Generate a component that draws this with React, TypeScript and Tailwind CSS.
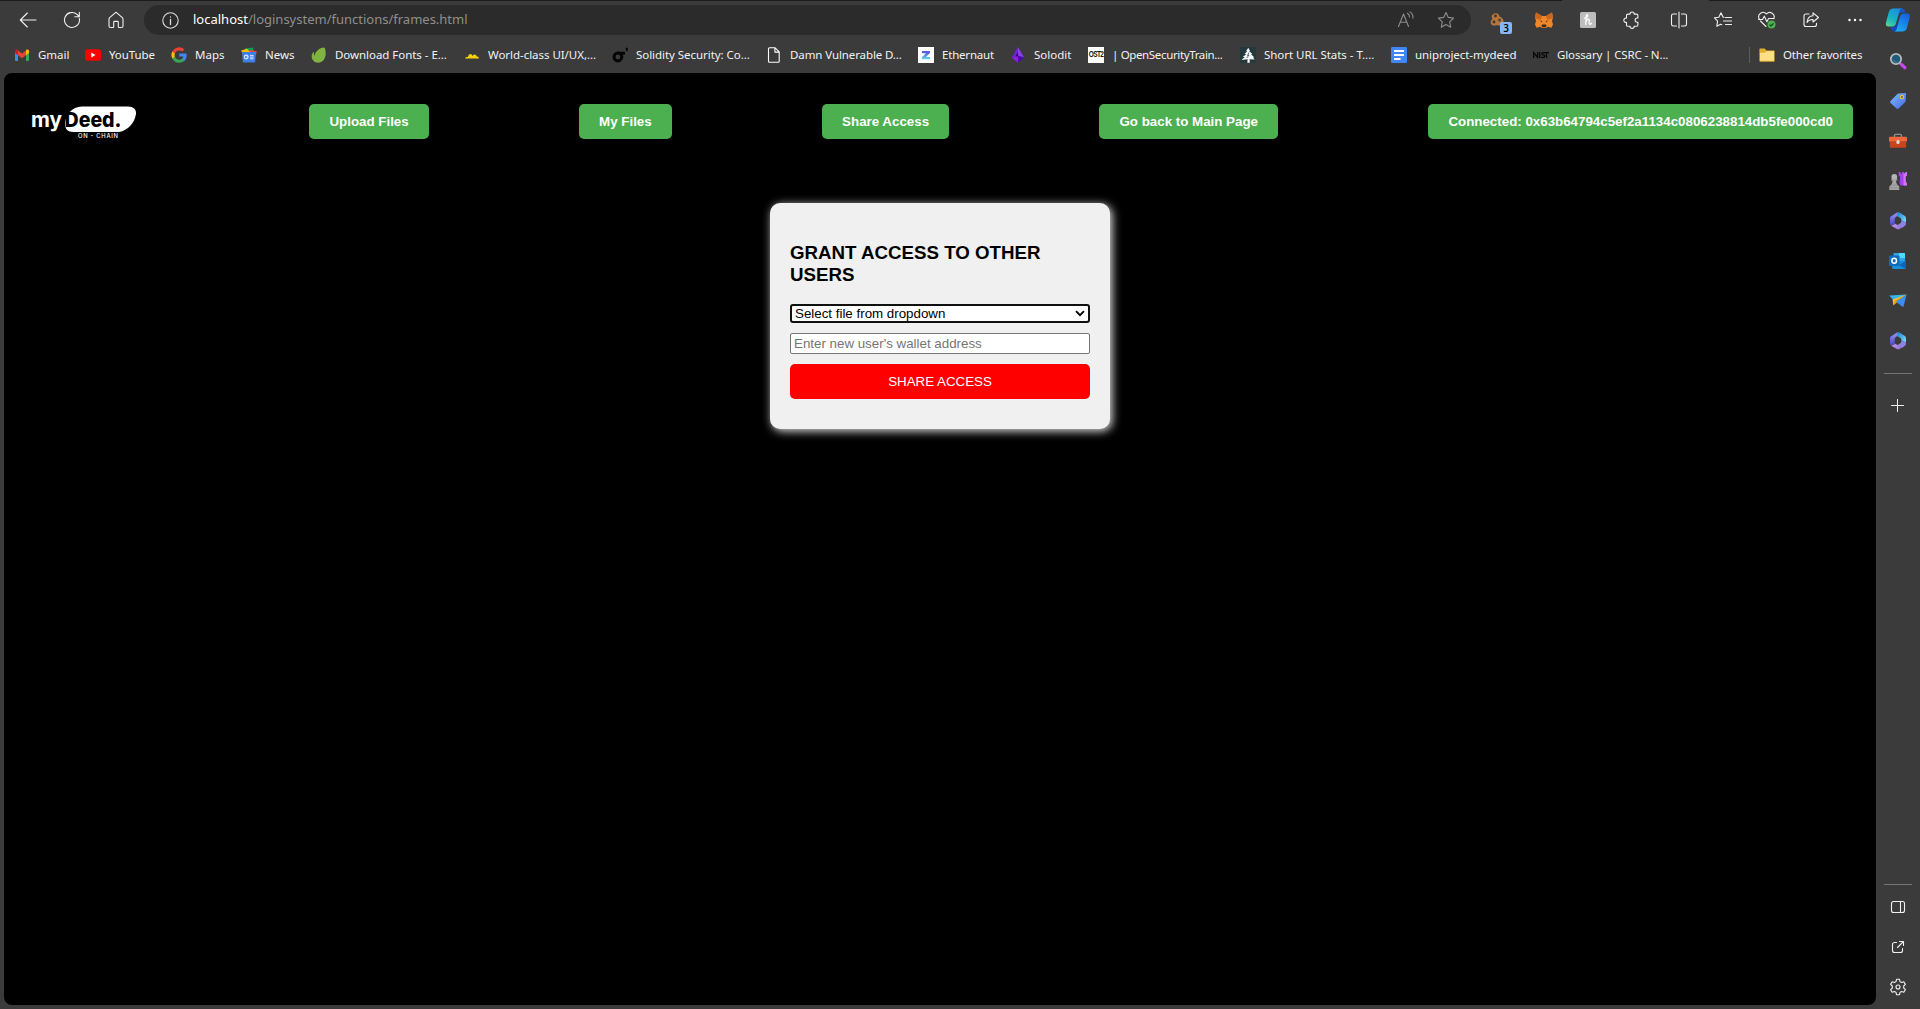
import type { ReactNode } from "react";

type IconProps = { children: ReactNode; size?: number; box?: number; className?: string; sw?: number };

function Line({ children, size = 16, box = 16, className = "text-[#f0f0f0]", sw = 1.1 }: IconProps) {
  return (
    <svg
      width={size}
      height={size}
      viewBox={`0 0 ${box} ${box}`}
      fill="none"
      stroke="currentColor"
      strokeWidth={sw}
      strokeLinecap="round"
      strokeLinejoin="round"
      className={`shrink-0 ${className}`}
    >
      {children}
    </svg>
  );
}

function Pic({ children, size = 16, box = 16 }: IconProps) {
  return (
    <svg width={size} height={size} viewBox={`0 0 ${box} ${box}`} className="shrink-0">
      {children}
    </svg>
  );
}

/* ---------- favicons ---------- */

const Gmail = () => (
  <Pic>
    <path d="M1 4v9.2c0 .5.4.8.8.8H4V6.5z" fill="#4285f4" />
    <path d="M15 4v9.2c0 .5-.4.8-.8.8H12V6.5z" fill="#34a853" />
    <path d="M4 3.6v4.6L8 11.2l4-3V3.6L8 6.6z" fill="#ea4335" />
    <path d="M1 4.2C1 2.6 2.6 2 3.8 3L4 3.2v5L1 6z" fill="#c5221f" />
    <path d="M15 4.2c0-1.6-1.6-2.2-2.8-1.2l-.2.2v5L15 6z" fill="#fbbc04" />
  </Pic>
);
const YouTube = () => (
  <Pic>
    <rect x="0" y="2.3" width="16" height="11.4" rx="2.8" fill="#f00" />
    <path d="M6.3 5.6v4.8L10.5 8z" fill="#fff" />
  </Pic>
);
const Google = () => (
  <Pic>
    <path d="M15.6 8.2c0-.6 0-1.1-.1-1.6H8.2v3h4.2a3.6 3.6 0 0 1-1.6 2.3v2h2.6c1.5-1.4 2.2-3.4 2.2-5.7z" fill="#4285f4" />
    <path d="M8.2 15.7c2.1 0 3.9-.7 5.2-1.9l-2.6-1.9c-.7.5-1.6.8-2.6.8a4.600 4.600 0 0 1-4.300-3.200H1.300v2a7.800 7.800 0 0 0 6.900 4.200z" fill="#34a853" />
    <path d="M3.900 9.500a4.600 4.600 0 0 1 0-3V4.500H1.300a7.700 7.700 0 0 0 0 7z" fill="#fbbc04" />
    <path d="M8.200 3.400c1.100 0 2.200.4 3 1.200l2.200-2.200A7.800 7.800 0 0 0 1.300 4.500l2.600 2a4.600 4.600 0 0 1 4.300-3.100z" fill="#ea4335" />
  </Pic>
);
const News = () => (
  <Pic>
    <path d="M4 1.500 12 .4l1 5H4z" fill="#0f9d58" />
    <path d="M.2 3.600 6 1.800l4 4H1z" fill="#fbbc04" />
    <path d="M9 3l6.800 1.200L15 8H9z" fill="#ea4335" />
    <path d="M1 5h14l-.8 9.600c0 .5-.4.9-.9.9H2.700c-.5 0-.9-.4-.9-.9z" fill="#3f7ee8" />
    <circle cx="5.2" cy="10" r="1.9" fill="none" stroke="#dce8ff" strokeWidth="1.1" />
    <path d="M5.400 10h1.900M9 8.400h3.500M9 10.100h3.700M9 11.800h3.500" stroke="#dce8ff" strokeWidth="1" />
  </Pic>
);
const Envato = () => (
  <Pic>
    <path d="M13 .4c1 0 1.800 2.500 1.700 6.200-.1 4.700-2.400 8.800-7 9.100-4 .3-7-2.700-7-6.200 0-2 .8-3.500 1.700-4.500.3-.3.700 0 .6.400-.2 1-.1 2.800.7 3.400.1-4.200 5-8.300 9.300-8.400z" fill="#80b341" />
  </Pic>
);
const Clouds = () => (
  <Pic>
    <path d="M1 11.400c.5-1.400 1.700-1.600 2.800-1.500C4.500 8.300 5.300 7.100 6.300 7.100c1.200 0 1.900.9 2.300 2 .4-.9 1.200-1.500 2-1.500 1.100 0 1.700.9 2.200 2 1.100 0 2 .5 2.300 1.800z" fill="#f7cf0b" />
  </Pic>
);
const Sigma = () => (
  <Pic>
    <circle cx="5.900" cy="10" r="3.900" fill="none" stroke="#050505" strokeWidth="3" />
    <path d="M5.500 4.700H13v3H8zM13.600.8h2.200v2.600l-1.300 1.300z" fill="#050505" />
  </Pic>
);
const FileIcon = () => (
  <Line className="text-white">
    <path d="M3.500.8h5.600l4.100 4.100v9.300c0 .6-.4 1-1 1H3.500c-.6 0-1-.4-1-1V1.800c0-.6.4-1 1-1zM8.900 1v4.100h4.200" />
  </Line>
);
const Zeppelin = () => (
  <Pic>
    <defs>
      <linearGradient id="zep" x1="0" y1="0" x2="0" y2="1">
        <stop offset=".2" stopColor="#5a5fe0" />
        <stop offset="1" stopColor="#63d8f8" />
      </linearGradient>
    </defs>
    <rect width="16" height="16" fill="#fff" />
    <path d="M4 4h8v2L8 10h4v2.300H3.800V10.300L8 6.300H4z" fill="url(#zep)" />
  </Pic>
);
const Solodit = () => (
  <Pic>
    <path d="M8 0v9.200L1.600 10.600z" fill="#6f22d6" />
    <path d="M8 0v9.200l6 1.400z" fill="#8b3df0" />
    <path d="M1.600 10.600 8 8.600v7.200z" fill="#8a1fe0" />
    <path d="m14 10.600-6-2v7.200z" fill="#4a0cae" />
    <path d="M7.900 5v4.500L5.500 9.300z" fill="#2b0a66" />
  </Pic>
);
const Ost = () => (
  <div className="flex size-4 shrink-0 items-center justify-center bg-white font-['Liberation_Sans'] text-[6.5px] leading-none font-bold tracking-[-0.6px] text-[#111]">
    <span className="scale-y-125">OST2</span>
  </div>
);
const Tree = () => (
  <Pic>
    <rect width="16" height="16" fill="#24393d" />
    <path d="m8.300.8 1.700 3.200-.9.100 3.200 3-1.300.100 3.500 3.200-1.700.2 2 2-5.200-.3.300 3.400H7.300l.3-3.400-6.100.8 3.300-3.200h-2l3.500-2.800H4.500l2.800-2.900H6z" fill="#f4f7f7" />
    <path d="m9 5.500-1.500 3 1.500-.4-2.300 3" stroke="#24393d" fill="none" strokeWidth=".7" />
  </Pic>
);
const Docs = () => (
  <Pic>
    <rect width="16" height="16" rx="1.2" fill="#4285f4" />
    <path d="M3 4h10M3 8h10M3 12h6.500" stroke="#fff" strokeWidth="1.9" />
  </Pic>
);
const Nist = () => (
  <Pic>
    <path d="M.7 11V5.500L4.600 10.300V5M6.700 5v6M14 5.700H9.900c-1.400 0-1.400 2.200 0 2.200h.7c1.500 0 1.500 2.400 0 2.400H8M13.500 5.700V11M11 5.700h5" fill="none" stroke="#080808" strokeWidth="1.3" />
  </Pic>
);
const Folder = () => (
  <Pic>
    <path d="M.4 2.500c0-.6.4-1 1-1h4.300l1.700 1.900h7.200c.6 0 1 .4 1 1v9.300c0 .6-.4 1-1 1H1.400c-.6 0-1-.4-1-1z" fill="#e0b12c" />
    <path d="M1 5.800h4.800l1.700-1.500H15v9.500H1z" fill="#ffdf86" />
  </Pic>
);

/* ---------- sidebar icons ---------- */

const Copilot = () => (
  <Pic size={26} box={26}>
    <defs>
      <linearGradient id="cpa" x1="0" y1="1" x2=".6" y2="0">
        <stop offset="0" stopColor="#62dc8d" />
        <stop offset=".45" stopColor="#19b4bd" />
        <stop offset="1" stopColor="#1b90e0" />
      </linearGradient>
      <linearGradient id="cpb" x1="0" y1="1" x2=".7" y2="0">
        <stop offset="0" stopColor="#1db6f7" />
        <stop offset="1" stopColor="#1762d8" />
      </linearGradient>
    </defs>
    <path d="M17 1.500c2 0 2.700 1.700 3.300 3.900h-3.700c-1.600 0-2.300.7-2.800 2.300L12 14.500 13.500 1.500z" fill="#1557c9" />
    <path d="M8 1.500h9c-1.600.4-2.200 1.600-2.700 3.200l-3.400 12C10.400 18.500 9 19.600 7 19.600H3.500C1.300 19.600.4 18 1 15.500L3.800 5C4.500 2.700 6 1.500 8 1.500z" fill="url(#cpa)" />
    <path d="M9 24.500c-2 0-2.700-1.800-3.300-4.600h2.500c1.800 0 2.800-1 3.300-2.500l2-5.500-.5 12.600z" fill="#1746bd" />
    <path d="M18.500 6.500h3.800c2.200 0 3.100 1.500 2.500 4l-2.900 10.600c-.6 2.200-2 3.400-4 3.400H9.500c1.500-.5 2-1.700 2.500-3.200l3-11.500c.5-2 1.600-3.300 3.500-3.300z" fill="url(#cpb)" />
  </Pic>
);
const Search = () => (
  <Pic size={18} box={18}>
    <path d="m10.800 11.300 2 1.700" stroke="#999" strokeWidth="2" />
    <path d="m12.500 12.500 3.300 3.200" stroke="#c945ee" strokeWidth="3.2" strokeLinecap="round" />
    <circle cx="7" cy="7" r="5.2" fill="#205b7b" stroke="#b8b8b8" strokeWidth="1.8" />
    <path d="M4.300 8a3.500 3.500 0 0 0 4 2" stroke="#3689ad" fill="none" />
  </Pic>
);
const Tag = () => (
  <Pic size={18} box={18}>
    <defs>
      <linearGradient id="tagg" x1="0" y1="0" x2="1" y2="1">
        <stop offset="0" stopColor="#7dbcff" />
        <stop offset="1" stopColor="#4767e8" />
      </linearGradient>
    </defs>
    <path d="M9.500 1.500 16 1c.6 0 1 .4 1 1l-.3 6.800c0 .4-.2.800-.5 1.100l-6.600 6.500c-.6.600-1.500.6-2.100 0L1.600 11c-.6-.6-.6-1.500 0-2.100L8.400 2c.3-.3.700-.5 1.100-.5z" fill="url(#tagg)" />
    <circle cx="13" cy="5" r="1.6" fill="#4c58a8" stroke="#f2bf1c" strokeWidth="1.3" />
  </Pic>
);
const Toolbox = () => (
  <Pic size={18} box={18}>
    <path d="M5.500 5V3.600c0-.7.5-1.200 1.200-1.200h4.600c.7 0 1.200.5 1.200 1.200V5" fill="none" stroke="#8e8e8e" strokeWidth="1.3" />
    <rect x="0" y="4.700" width="18" height="5" rx="1" fill="#f3663b" />
    <path d="M.8 9.500h16.400v5c0 .8-.5 1.300-1.300 1.300H2.100c-.8 0-1.300-.5-1.300-1.300z" fill="#c9431d" />
    <rect x="7.400" y="8" width="3.200" height="4" rx="1.5" fill="#dadada" />
  </Pic>
);
const Chess = () => (
  <Pic size={18} box={18}>
    <path d="M9.700 0h1.900v1.500h1.400V0h2v1.500h1.400V0H18v3.500l-1.500 1.200.4 5.300c.7.500 1.100 1.300 1.100 3.500h-6.500L10.500 11l.6-6.300-1.400-1.200z" fill="#a843ea" />
    <path d="M14.500 1.500h1.900V0H18v3.500l-1.500 1.200.4 5.300c.7.500 1.100 1.300 1.100 3.500h-3.500z" fill="#cf72ff" />
    <circle cx="5.300" cy="4.900" r="2.900" fill="#b5b5b5" />
    <path d="M2.300 7h6v1.500H7.100c.1 2.200.7 3.700 1.500 4.500 1.200.5 1.700 1.400 1.700 2.600V18H.3v-2.400c0-1.200.6-2.100 1.700-2.600.9-.8 1.400-2.300 1.500-4.500H2.300z" fill="#a5a5a5" />
    <path d="M2 13.200h6.600M.5 16h9.600" stroke="#8a8a8a" strokeWidth=".7" />
  </Pic>
);
const M365 = ({ id }: { id: string }) => (
  <Pic size={18} box={18}>
    <defs>
      <linearGradient id={`${id}a`} x1="0" y1="0" x2="0" y2="1">
        <stop offset="0" stopColor="#8f9cf5" />
        <stop offset="1" stopColor="#5045bd" />
      </linearGradient>
      <linearGradient id={`${id}b`} x1="0" y1="0" x2="1" y2=".8">
        <stop offset="0" stopColor="#2580cf" />
        <stop offset="1" stopColor="#6bd8fb" />
      </linearGradient>
      <linearGradient id={`${id}c`} x1="0" y1="0" x2="1" y2="0">
        <stop offset="0" stopColor="#cf9cf0" />
        <stop offset="1" stopColor="#7c62cc" />
      </linearGradient>
    </defs>
    <path d="M8.500.300 2.500 3.900C1.500 4.500 1 5.400 1 6.500v5c0 1.500 1.600 2.300 2.800 1.600l1.900-1.200V7.200c0-1 .4-1.700 1.200-2.200L9.500 3.300z" fill={`url(#${id}a)`} />
    <path d="M8 .5c.8-.4 1.700-.4 2.400 0L15.600 3.800c.9.600 1.400 1.500 1.400 2.600v4.200L12.300 8.200V7.400c0-.6-.3-1.100-.8-1.400L8 4z" fill={`url(#${id}b)`} />
    <path d="M1.600 13c.6.700 1.500.8 2.200.3l2.500-1.600 2.300 1.200 3.700-2.200 3.700 3-5.500 3.300c-.8.500-1.700.5-2.500 0L2.600 14z" fill={`url(#${id}c)`} />
    <path d="m12.300 8.200 4.700 2.400v1c0 1-.5 2-1.400 2.500l-3 1.800-2.100-4 1-.6c.5-.3.800-.8.800-1.400z" fill="#8a83e6" />
  </Pic>
);
const Outlook = () => (
  <Pic size={18} box={18}>
    <path d="M4.500 2c0-.6.400-1 1-1H15c.6 0 1 .4 1 1v9H4.500z" fill="#28a8ea" />
    <path d="M10 1h5c.6 0 1 .4 1 1v4h-6z" fill="#50d9ff" />
    <path d="M3 9h14v6.800c0 .7-.5 1.200-1.200 1.200H4.200c-.7 0-1.200-.5-1.200-1.200z" fill="#1490df" />
    <path d="m17 8.500-7 4.800 6.500 3.500c.3-.3.500-.6.500-1z" fill="#1066b5" />
    <rect x="0" y="3.500" width="10.500" height="10.500" rx="1" fill="#0f6cbd" />
    <ellipse cx="5.200" cy="8.700" rx="2.300" ry="2.500" fill="none" stroke="#fff" strokeWidth="1.5" />
  </Pic>
);
const Plane = () => (
  <Pic size={18} box={18}>
    <path d="M.2 3.500 17.600 2.400 5 8.800z" fill="#35b5e8" />
    <path d="M17.600 2.400 3.600 7.500l.7 5.800z" fill="#f7c32d" />
    <path d="m4.300 13.300 3.500-2.700L17.600 2.400 6 8.500z" fill="#e19a12" />
    <path d="M17.600 2.400 7 9.800l6.500 5c.5.300.9.200 1-.4z" fill="#3b8df2" />
  </Pic>
);

/* ---------- toolbar icons ---------- */

const BackIcon = () => (
  <Line size={18} box={18}><path d="M17 9H1.500M8.300 2 1.300 9l7 7" /></Line>
);
const ReloadIcon = () => (
  <Line size={18} box={18}><path d="M16.300 7.300A7.500 7.500 0 1 1 14 3.400l2 2M16.300 1.300v4.400h-4.500" /></Line>
);
const HomeIcon = () => (
  <Line size={18} box={18}><path d="M8.200 1.800a1.200 1.200 0 0 1 1.600 0l5.800 5.100c.3.300.4.600.4 1V15c0 .9-.6 1.500-1.500 1.500H12c-.4 0-.7-.3-.7-.7v-4.500c0-.5-.4-.9-.9-.9H7.600c-.5 0-.9.400-.9.900v4.500c0 .4-.3.700-.7.700H3.500C2.600 16.500 2 15.900 2 15V7.900c0-.4.100-.7.400-1z" /></Line>
);
const InfoIcon = () => (
  <Line size={17} box={17} className="text-[#dedede]"><circle cx="8.500" cy="8.500" r="7.700" /><path d="M8.500 7.500v5M8.500 4.800v.2" strokeWidth="1.3" /></Line>
);
const ReadAloud = () => (
  <Line size={18} box={18} className="text-[#8d8d8d]"><path d="m1.500 15.500 5-12.500 5 12.500M3.200 11.300h6.600M10.500 2.200a4.500 4.500 0 0 1 2 3.800M13 .9a7 7 0 0 1 3 6.100" /></Line>
);
const StarIcon = () => (
  <Line size={18} box={18} className="text-[#8d8d8d]"><path d="m9 1.500 2.300 4.900 5.300.7-3.900 3.700 1 5.400L9 13.600l-4.700 2.600 1-5.400L1.400 7.100l5.300-.7z" /></Line>
);
const CookieIcon = () => (
  <div className="relative size-[22px] shrink-0">
    <svg width="16" height="16" viewBox="0 0 16 16" className="absolute top-[4px] left-[1px]">
      <path d="M5 .3c2-.6 3.700.5 4.200 2.300.2 1 .8 1.300 1.700 1.700 2 1 3 3 2.500 5.200-.6 2.400-3 3.600-5.200 2.900-1-.3-1.700-.1-2.600.2-2.300.6-4.600-.6-4.900-2.800-.2-1.600.6-3 1.900-3.700C1.200 4.600.8 1.700 5 .3z" fill="#b27741" />
      <circle cx="5.500" cy="3" r="1.400" fill="#423224" />
      <circle cx="4" cy="9" r="1.400" fill="#423224" />
      <circle cx="9.500" cy="7" r="1.500" fill="#5c4028" />
    </svg>
    <div className="absolute top-[13px] left-[11px] flex h-[12px] w-[12px] items-center justify-center rounded-[2px] bg-[#8ab4f8] font-['Open_Sans'] text-[10px] leading-none font-semibold text-black">3</div>
  </div>
);
const FoxIcon = () => (
  <Pic size={18} box={18}>
    <path d="M1 1.500 7 5h4l6-3.500 1 5-1 3.500 1 3.500-1.500 3.300-3.800-1-2 1.200H7.300l-2-1.200-3.800 1L0 13.500 1 10 0 6.500z" fill="#f0862a" />
    <path d="m1 1.500 6 3.500-1.500 4L0 7zM17 1.500 11 5l1.500 4L18 7z" fill="#c9661f" />
    <path d="m5 9.500 2.400.7-.7 1zM13 9.500l-2.400.7.7 1z" fill="#26303a" />
    <path d="m6.500 14.500.8-.9h3.400l.8.900-.9 1.800H7.400z" fill="#3b2a20" />
  </Pic>
);
const HoneyIcon = () => (
  <Pic>
    <rect width="16" height="16" rx="1.5" fill="#bdbdbd" />
    <path d="M4.300 6.200c2-.4 3.500-1.700 3.400-3-.1-.9-1.300-.8-1.500.9L5.700 12.500M5.700 10.500c.5-2 1.500-3.400 2.700-3.400 1.500 0 .5 2.700.8 4.300.3 1.300 1.400 1 2.200-.1" fill="none" stroke="#fff" strokeWidth="1.3" strokeLinecap="round" />
  </Pic>
);
const PuzzleIcon = () => (
  <Line size={18} box={18}><path d="M3.500 5V4.500c0-.8.600-1.400 1.400-1.400H7a2.100 2.100 0 0 1 4.200 0h2.300c.8 0 1.400.6 1.400 1.400V7h-.7a2.100 2.100 0 0 0 0 4.200h.7v2.700c0 .8-.6 1.400-1.400 1.400h-2.300a2.100 2.100 0 0 1-4.200 0H4.900c-.8 0-1.400-.6-1.400-1.400v-2.500a2.200 2.200 0 1 1 0-4.300z" /></Line>
);
const SplitIcon = () => (
  <Line size={18} box={18}><path d="M9 1v16M6.500 3H3.200C2.200 3 1.500 3.700 1.500 4.700v8.600c0 1 .7 1.700 1.700 1.700h3.300M11.500 3h3.300c1 0 1.700.7 1.700 1.700v8.600c0 1-.7 1.700-1.700 1.700h-3.300" /></Line>
);
const FavsIcon = () => (
  <Line size={18} box={18}><path d="M10 6.300 9 6.100 7 1.800 4.800 6.200l-4.300.6 3.100 3.400-.8 5 3.800-2 1.200.5M11.500 6.500h6M9.500 10h8M11.500 13.500h6" /></Line>
);
const HeartIcon = () => (
  <svg width="20" height="20" viewBox="0 0 20 20" fill="none" className="shrink-0">
    <path d="M2.300 9A4.400 4.400 0 0 1 9.500 4a4.400 4.400 0 0 1 7.300 4.700M3.500 11l5.500 5.500M1.500 9.500h4l1.800-3.300 2.600 5.500 1.700-3.200h5.500" stroke="#f0f0f0" strokeWidth="1.1" strokeLinecap="round" strokeLinejoin="round" />
    <circle cx="14.500" cy="14.500" r="4" fill="#4caf50" />
    <path d="m12.600 14.600 1.300 1.300 2.600-2.600" stroke="#173b18" strokeWidth="1.1" />
  </svg>
);
const ShareIcon = () => (
  <Line size={18} box={18}><path d="M7 3H4a2 2 0 0 0-2 2v8.500a2 2 0 0 0 2 2h8.500a2 2 0 0 0 2-2v-1.200M11 1.800 16.500 6.500 11 11V8.500c-3 0-4.800 1-6 3 .3-4 2.500-6.600 6-6.800z" /></Line>
);
const DotsIcon = () => (
  <Pic>
    <g fill="#fff"><circle cx="2.500" cy="8" r="1.200" /><circle cx="8" cy="8" r="1.200" /><circle cx="13.500" cy="8" r="1.200" /></g>
  </Pic>
);

const bookmarks: { label: string; icon: ReactNode; w: string }[] = [
  { label: "Gmail", icon: <Gmail />, w: "w-[71px]" },
  { label: "YouTube", icon: <YouTube />, w: "w-[86px] tracking-[-0.1px]" },
  { label: "Maps", icon: <Google />, w: "w-[70px]" },
  { label: "News", icon: <News />, w: "w-[70px]" },
  { label: "Download Fonts - E...", icon: <Envato />, w: "w-[153px] tracking-[-0.04px]" },
  { label: "World-class UI/UX,...", icon: <Clouds />, w: "w-[148px] tracking-[-0.04px]" },
  { label: "Solidity Security: Co...", icon: <Sigma />, w: "w-[154px] tracking-[-0.05px]" },
  { label: "Damn Vulnerable D...", icon: <FileIcon />, w: "w-[152px] tracking-[-0.1px]" },
  { label: "Ethernaut", icon: <Zeppelin />, w: "w-[92px] tracking-[-0.2px]" },
  { label: "Solodit", icon: <Solodit />, w: "w-[78px]" },
  { label: "| OpenSecurityTrain...", icon: <Ost />, w: "w-[152px] tracking-[-0.35px]" },
  { label: "Short URL Stats - T....", icon: <Tree />, w: "w-[151px] tracking-[-0.04px]" },
  { label: "uniproject-mydeed", icon: <Docs />, w: "w-[142px] tracking-[-0.05px]" },
  { label: "Glossary | CSRC - N...", icon: <Nist />, w: "w-[140px] tracking-[-0.14px]" },
];

function Slot({ children }: { children: ReactNode }) {
  return <div className="flex h-10 w-11 shrink-0 items-center justify-center">{children}</div>;
}

function Toolbar() {
  return (
    <div className="flex h-10 items-center pl-1.5">
      <Slot><BackIcon /></Slot>
      <Slot><ReloadIcon /></Slot>
      <Slot><HomeIcon /></Slot>
      <div className="ml-1.5 flex h-[30px] w-[1327px] shrink-0 items-center rounded-full bg-[#2b2b2b] pl-[18px]">
        <InfoIcon />
        <span className="ml-3.5 text-[13px] whitespace-nowrap text-[#8f8f8f]">
          <span className="text-white">localhost</span>/loginsystem/functions/frames.html
        </span>
        <div className="ml-auto flex gap-[22px] pr-4">
          <ReadAloud />
          <StarIcon />
        </div>
      </div>
      <div className="ml-[7px] flex items-center">
        <Slot><CookieIcon /></Slot>
        <Slot><FoxIcon /></Slot>
        <Slot><HoneyIcon /></Slot>
        <Slot><PuzzleIcon /></Slot>
      </div>
      <div className="ml-[1px] h-4 w-px bg-[#5c5c5c]" />
      <div className="ml-[2px] flex items-center">
        <Slot><SplitIcon /></Slot>
        <Slot><FavsIcon /></Slot>
        <Slot><HeartIcon /></Slot>
        <Slot><ShareIcon /></Slot>
        <Slot><DotsIcon /></Slot>
      </div>
    </div>
  );
}

function Bookmarks() {
  return (
    <div className="flex h-[33px] items-start pt-[7px] pl-3.5 text-[11.5px] leading-4 text-[#f2f2f2]">
      {bookmarks.map((b) => (
        <div key={b.label} className={`flex shrink-0 items-center gap-2 whitespace-nowrap ${b.w}`}>
          {b.icon}
          <span className="-mt-px">{b.label}</span>
        </div>
      ))}
      <div className="ml-[76px] h-4 w-px bg-[#5c5c5c]" />
      <div className="ml-[9px] flex items-center gap-2 tracking-[-0.15px] whitespace-nowrap">
        <Folder />
        <span className="-mt-px">Other favorites</span>
      </div>
    </div>
  );
}

function SideSlot({ children }: { children: ReactNode }) {
  return <div className="flex h-10 shrink-0 items-center justify-center">{children}</div>;
}

function Sidebar() {
  return (
    <aside className="flex w-11 shrink-0 flex-col">
      <SideSlot><Copilot /></SideSlot>
      <div className="mt-px">
        <SideSlot><Search /></SideSlot>
        <SideSlot><Tag /></SideSlot>
        <SideSlot><Toolbox /></SideSlot>
        <SideSlot><Chess /></SideSlot>
        <SideSlot><M365 id="m1" /></SideSlot>
        <SideSlot><Outlook /></SideSlot>
        <SideSlot><Plane /></SideSlot>
        <SideSlot><M365 id="m2" /></SideSlot>
      </div>
      <div className="mx-2 mt-3 h-px bg-[#757575]" />
      <div className="mt-[11px] flex h-10 items-center justify-center pr-px">
        <Line size={13} box={13} sw={1}><path d="M6.500.500v12M.500 6.500h12" /></Line>
      </div>
      <div className="mx-2 mt-auto h-px bg-[#757575]" />
      <div className="mt-[2px] mb-[2px]">
        <SideSlot>
          <Line><path d="M3.500 2.500h9a2 2 0 0 1 2 2v7a2 2 0 0 1-2 2h-9a2 2 0 0 1-2-2v-7a2 2 0 0 1 2-2zM10.500 2.500v11" /></Line>
        </SideSlot>
        <SideSlot>
          <Line><path d="M6.500 3.500H4.500a2 2 0 0 0-2 2v6a2 2 0 0 0 2 2h6a2 2 0 0 0 2-2v-2M9.500 2.500h4v4M13.300 2.700 7.500 8.500" /></Line>
        </SideSlot>
        <SideSlot>
          <Line size={18} box={18}>
            <circle cx="9" cy="9" r="2" />
            <path d="M7.500 1.300h3l.5 2.300 1.500.9 2.300-.8 1.600 2.700L14.700 8v2l1.700 1.600-1.600 2.700-2.300-.8-1.500.9-.5 2.300h-3L7 14.400l-1.500-.9-2.300.8-1.600-2.700L3.300 10V8L1.600 6.400l1.600-2.700 2.300.8L7 3.600z" />
          </Line>
        </SideSlot>
      </div>
    </aside>
  );
}

function Logo() {
  return (
    <svg width="129" height="41" viewBox="0 0 129 41" className="shrink-0">
      <path d="M52 5.500H98c5.500 0 8.500 3 8 7.500C104.500 22 98 29.500 89 31H43c-5 0-8-3-8-8 0-9 7-17.500 17-17.500z" fill="#fff" />
      <text x="1" y="26" fill="#fff" fontFamily="Inter, sans-serif" fontWeight="700" fontSize="20.500" textLength="31" lengthAdjust="spacingAndGlyphs">my</text>
      <text x="34.500" y="26" fill="#000" fontFamily="Inter, sans-serif" fontWeight="800" fontSize="20.500" textLength="57" lengthAdjust="spacingAndGlyphs">Deed.</text>
      <text x="48" y="36.600" fill="#fff" fontFamily="Inter, sans-serif" fontWeight="500" fontSize="5.800" textLength="40">ON - CHAIN</text>
    </svg>
  );
}

function NavButton({ children }: { children: ReactNode }) {
  return (
    <button className="h-[35px] shrink-0 rounded-[5px] bg-[#4caf50] px-5 text-[13.333px] leading-[15px] font-bold whitespace-nowrap text-white">
      {children}
    </button>
  );
}

function Page() {
  return (
    <main className="h-[932px] rounded-lg bg-black font-['Liberation_Sans',Arial,sans-serif]">
      <nav className="flex h-[97px] items-center justify-between pr-[23px] pl-[26px]">
        <Logo />
        <NavButton>Upload Files</NavButton>
        <NavButton>My Files</NavButton>
        <NavButton>Share Access</NavButton>
        <NavButton>Go back to Main Page</NavButton>
        <NavButton>Connected: 0x63b64794c5ef2a1134c0806238814db5fe000cd0</NavButton>
      </nav>
      <form className="mx-auto mt-[33px] flex h-[226px] w-[340px] flex-col rounded-[10px] bg-[#f0f0f0] px-5 pt-[39px] shadow-[2px_2px_10px_rgba(255,255,255,0.9)]">
        <h3 className="text-[18.72px] leading-[22px] font-bold text-black">GRANT ACCESS TO OTHER USERS</h3>
        <div className="mt-[18px] flex h-[19px] shrink-0 items-center justify-between rounded-[3px] border-2 border-[#101010] bg-white pr-[3px] pl-[3px] text-[13.333px] leading-[15px] text-black">
          <span>Select file from dropdown</span>
          <svg width="10" height="7" viewBox="0 0 10 7" fill="none" stroke="#000" strokeWidth="1.9">
            <path d="m1 1.200 4 4 4-4" />
          </svg>
        </div>
        <input
          className="mt-[10px] h-[21px] shrink-0 rounded-[2px] border border-[#767676] bg-white px-[3px] text-[13.333px] leading-[15px] placeholder:text-[#757575]"
          placeholder="Enter new user's wallet address"
        />
        <button className="mt-[10px] h-[35px] shrink-0 rounded-[5px] bg-[#f00] text-[13.333px] leading-[15px] text-white">SHARE ACCESS</button>
      </form>
    </main>
  );
}

export default function App() {
  return (
    <div className="relative flex h-[1009px] w-[1920px] overflow-hidden bg-[#3b3b3b] font-['Noto_Sans','Open_Sans',sans-serif]">
      <div className="w-[1876px] shrink-0">
        <Toolbar />
        <Bookmarks />
        <div className="pl-1">
          <Page />
        </div>
      </div>
      <Sidebar />
      <div className="absolute inset-x-0 top-0 flex h-px justify-between">
        <div className="w-[1562px] bg-[#1c1c1c]" />
        <div className="w-[211px] bg-[#1c1c1c]" />
      </div>
    </div>
  );
}
